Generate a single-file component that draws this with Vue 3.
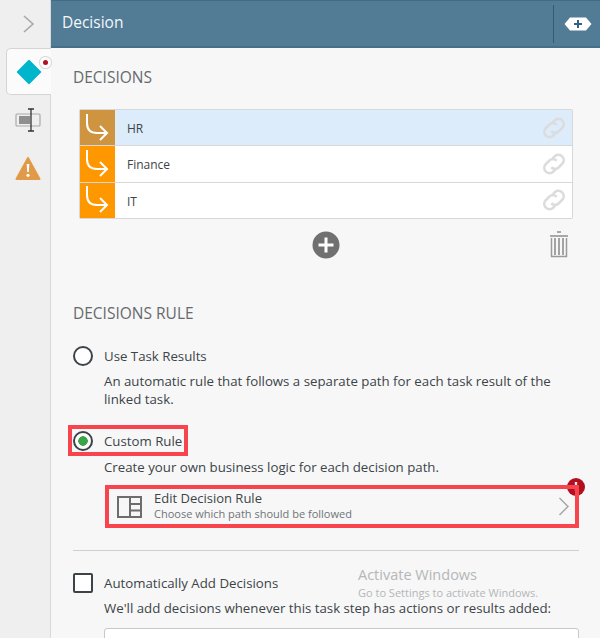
<template>
  <div class="panel">
    <aside class="rail">
      <div class="rail-top">
        <svg width="14" height="20" viewBox="0 0 14 20"><path d="M2 2l9 8-9 8" fill="none" stroke="#a8a8a8" stroke-width="1.6"/></svg>
      </div>
      <div class="rail-tab">
        <svg class="diamond" width="26" height="26" viewBox="0 0 26 26"><path d="M13 1.500L24.500 13 13 24.500 1.500 13z" fill="#00b5cc" stroke="#00b5cc" stroke-width="1.500" stroke-linejoin="round"/></svg>
        <span class="tab-dot"></span>
      </div>
      <div class="rail-icon">
        <svg width="26" height="25" viewBox="0 0 26 25">
          <rect x="1" y="6" width="24" height="12" rx="1" fill="none" stroke="#a9a9a9" stroke-width="1.200"/>
          <rect x="4" y="8" width="11" height="8" fill="#8f8f8f"/>
          <path d="M13 1h6M13 23h6M16 1v22" fill="none" stroke="#333" stroke-width="1.300"/>
        </svg>
      </div>
      <div class="rail-icon warn">
        <svg width="26" height="25" viewBox="0 0 26 25">
          <path d="M13 2L24.500 23H1.500z" fill="#e09a48" stroke="#e09a48" stroke-width="2" stroke-linejoin="round"/>
          <path d="M11.700 8h2.600l-.5 8h-1.600z" fill="#fff"/>
          <circle cx="13" cy="19.300" r="1.600" fill="#fff"/>
        </svg>
      </div>
    </aside>

    <div class="main">
      <header class="topbar">
        <span class="topbar-title">Decision</span>
        <div class="topbar-action">
          <svg width="28" height="14" viewBox="0 0 28 14">
            <path d="M6 0.500h16l5.500 6.500-5.500 6.500H6L0.500 7z" fill="#fff"/>
            <path d="M14 3v8M10 7h8" stroke="#2f6285" stroke-width="2"/>
          </svg>
        </div>
      </header>

      <section class="content">
        <h2 class="section-title">DECISIONS</h2>

        <ul class="decision-list">
          <li v-for="(item, i) in decisions" :key="item" class="decision-row" :class="{ selected: i === 0 }">
            <span class="decision-icon">
              <svg width="26" height="28" viewBox="0 0 26 28">
                <path d="M2 0v9c0 7 4 10 10 10h10M15 12l7 7-7 7" fill="none" stroke="#fff" stroke-width="2"/>
              </svg>
            </span>
            <span class="decision-name">{{ item }}</span>
            <svg class="link-icon" width="28" height="28" viewBox="0 0 26 26">
              <g fill="none" stroke="#dcdcdc" stroke-width="2.400">
                <path d="M11 9l3-3.500a5 5 0 0 1 7 7l-3.500 3.500a5 5 0 0 1-7 0"/>
                <path d="M15 17l-3 3.500a5 5 0 0 1-7-7L8.500 10a5 5 0 0 1 7 0"/>
              </g>
            </svg>
          </li>
        </ul>

        <div class="list-actions">
          <svg width="28" height="28" viewBox="0 0 28 28">
            <circle cx="14" cy="14" r="13.500" fill="#707070"/>
            <path d="M14 6.500v15M6.500 14h15" stroke="#fff" stroke-width="3"/>
          </svg>
          <svg class="trash" width="20" height="27" viewBox="0 0 20 27">
            <path d="M8 1h4M1 5h18" stroke="#8f8f8f" stroke-width="1.500" fill="none"/>
            <path d="M2.500 7v18.500h15V7" stroke="#9a9a9a" stroke-width="1.500" fill="none"/>
            <path d="M6 7v17M10 7v17M14 7v17" stroke="#9a9a9a" stroke-width="1.800" fill="none"/>
          </svg>
        </div>

        <h2 class="section-title rule-title">DECISIONS RULE</h2>

        <div class="option task">
          <span class="radio"></span>
          <span class="option-label">Use Task Results</span>
        </div>
        <p class="option-text">An automatic rule that follows a separate path for each task result of the linked task.</p>

        <div class="option custom">
          <span class="radio checked"></span>
          <span class="option-label">Custom Rule</span>
          <span class="mark mark-custom"></span>
        </div>
        <p class="option-text custom-text">Create your own business logic for each decision path.</p>

        <div class="edit-rule">
          <svg class="edit-icon" width="25" height="22" viewBox="0 0 25 22">
            <path d="M1 1h23v20H1zM13 1v20M13 8h11M13 14.500h11" fill="none" stroke="#6d6d6d" stroke-width="2"/>
          </svg>
          <div class="edit-copy">
            <div class="edit-title">Edit Decision Rule</div>
            <div class="edit-sub">Choose which path should be followed</div>
          </div>
          <svg class="edit-arrow" width="12" height="19" viewBox="0 0 12 19"><path d="M1.500 1l8.500 8.500-8.500 8.500" fill="none" stroke="#a8a8a8" stroke-width="1.500"/></svg>
          <span class="alert">!</span>
          <span class="mark mark-edit"></span>
        </div>

        <hr class="divider" />

        <div class="option auto">
          <span class="checkbox"></span>
          <span class="option-label">Automatically Add Decisions</span>
        </div>
        <p class="option-text auto-text">We'll add decisions whenever this task step has actions or results added:</p>
        <div class="field"></div>
      </section>

      <div class="watermark">
        <div class="wm-title">Activate Windows</div>
        <div class="wm-sub">Go to Settings to activate Windows.</div>
      </div>
    </div>
  </div>
</template>

<script setup>
const decisions = ['HR', 'Finance', 'IT']
</script>

<style>
html, body {
  margin: 0;
  overflow: hidden;
}
</style>

<style scoped>
.panel {
  display: flex;
  width: 600px;
  height: 638px;
  overflow: hidden;
  background: #f7f7f7;
  font-family: "Open Sans", "Noto Sans", sans-serif;
  color: #3c4448;
}

.rail {
  width: 51px;
  flex: none;
  background: #efefef;
  border-right: 1px solid #d9d9d9;
  box-sizing: border-box;
  display: flex;
  flex-direction: column;
  align-items: flex-end;
}

.rail-top {
  height: 48px;
  width: 100%;
  padding-left: 22px;
  box-sizing: border-box;
  display: flex;
  align-items: center;
  background: #efefef;
}

.rail-tab {
  width: 45px;
  height: 47px;
  margin-right: -1px;
  box-sizing: border-box;
  background: #fbfbfb;
  border: 1px solid #d4d4d4;
  border-right: none;
  border-radius: 5px 0 0 5px;
  position: relative;
  display: flex;
  align-items: center;
  padding-left: 9px;
}

.tab-dot {
  position: absolute;
  left: 36px;
  top: 11px;
  width: 5px;
  height: 5px;
  border-radius: 50%;
  background: #b3101f;
  box-shadow: 0 0 0 3px #fff, 0 0 0 4px #d8d8d8;
}

.rail-icon {
  width: 100%;
  height: 25px;
  margin-top: 13px;
  display: flex;
  padding-left: 15px;
  box-sizing: border-box;
}

.rail-icon.warn {
  margin-top: 23px;
}

.main {
  flex: 1;
  min-width: 0;
  position: relative;
}

.topbar {
  height: 48px;
  box-sizing: border-box;
  background: #527b95;
  border-top: 1px solid #456b84;
  border-bottom: 2px solid #44708c;
  display: flex;
  align-items: center;
  justify-content: space-between;
  padding-left: 11px;
}

.topbar-title {
  color: #f4f8fa;
  font-size: 15.500px;
  margin-bottom: 3px;
}

.topbar-action {
  width: 47px;
  height: 38px;
  border-left: 1px solid #2f5d7a;
  display: flex;
  align-items: center;
  justify-content: center;
  box-sizing: border-box;
  padding-left: 1px;
}

.content {
  padding: 0 21px 0 22px;
}

.section-title {
  margin: 0;
  padding-top: 20px;
  font-size: 15.500px;
  line-height: 19px;
  font-weight: 400;
  color: #666a6d;
}

.decision-list {
  list-style: none;
  margin: 22px 0 0 6px;
  padding: 0;
  width: 494px;
  box-sizing: border-box;
  border: 1px solid #d8d8d8;
  border-radius: 2px;
  border-bottom: none;
}

.decision-row {
  height: 36.330px;
  box-sizing: border-box;
  border-bottom: 1px solid #d8d8d8;
  background: #fff;
  display: flex;
  align-items: center;
  font-size: 12px;
}

.decision-row.selected {
  background: #dcecfb;
}

.decision-icon {
  width: 35px;
  height: 100%;
  background: #ff9800;
  display: flex;
  align-items: center;
  justify-content: center;
  flex: none;
}

.selected .decision-icon {
  background: #cf9440;
}

.decision-name {
  flex: 1;
  padding: 2px 0 0 12px;
}

.link-icon {
  margin-right: 4px;
}

.list-actions {
  position: relative;
  height: 27px;
  margin-top: 12.500px;
  display: flex;
  justify-content: center;
}

.trash {
  position: absolute;
  left: 476px;
  top: 0;
}

.rule-title {
  padding-top: 46px;
}

.option {
  display: flex;
  align-items: center;
  font-size: 13.250px;
  position: relative;
}

.radio {
  width: 20px;
  height: 20px;
  flex: none;
  box-sizing: border-box;
  border: 2px solid #3c4448;
  border-radius: 50%;
  background: #fff;
  margin-right: 11px;
}

.radio.checked {
  background: radial-gradient(circle, #3aa648 0 4.500px, #fff 5px);
}

.task {
  margin-top: 23px;
}

.option-text {
  margin: 6px 0 0 31px;
  font-size: 13.250px;
  line-height: 18px;
  width: 470px;
}

.custom {
  margin-top: 23px;
}

.custom-text {
  margin-top: 7px;
}

.mark {
  position: absolute;
  border: 4px solid #f8444c;
  box-sizing: border-box;
  pointer-events: none;
}

.mark-custom {
  left: -5px;
  top: -6px;
  width: 120px;
  height: 31px;
}

.edit-rule {
  position: relative;
  margin: 12px 0 0 35px;
  height: 37px;
  display: flex;
  align-items: center;
}

.edit-icon {
  margin-left: 9px;
  flex: none;
}

.edit-copy {
  margin: 0 0 2px 12px;
  flex: 1;
}

.edit-title {
  font-size: 13px;
  line-height: 16px;
}

.edit-sub {
  font-size: 11px;
  line-height: 16px;
  color: #6f7477;
}

.edit-arrow {
  margin-right: 9px;
}

.alert {
  position: absolute;
  right: -6px;
  top: -10px;
  width: 18px;
  height: 18px;
  border-radius: 50%;
  background: #b3101f;
  color: #fff;
  font-size: 12px;
  font-weight: 700;
  line-height: 18px;
  text-align: center;
}

.mark-edit {
  left: -3px;
  top: -3px;
  width: 474px;
  height: 43px;
}

.divider {
  border: none;
  border-top: 1px solid #cfcfcf;
  margin: 25px 0 0;
  width: 506px;
}

.auto {
  margin-top: 22px;
}

.checkbox {
  width: 20px;
  height: 20px;
  flex: none;
  box-sizing: border-box;
  border: 2.500px solid #3c4448;
  border-radius: 2px;
  background: #fff;
  margin-right: 11px;
}

.auto-text {
  width: 490px;
}

.field {
  margin: 11px 0 0 31px;
  height: 40px;
  width: 475px;
  box-sizing: border-box;
  background: #fff;
  border: 1px solid #c8c8c8;
  border-radius: 3px;
}

.watermark {
  position: absolute;
  left: 307px;
  top: 565px;
  color: #b4b6b8;
  pointer-events: none;
}

.wm-title {
  font-size: 14.500px;
  line-height: 20px;
}

.wm-sub {
  font-size: 11px;
  line-height: 16px;
}
</style>
